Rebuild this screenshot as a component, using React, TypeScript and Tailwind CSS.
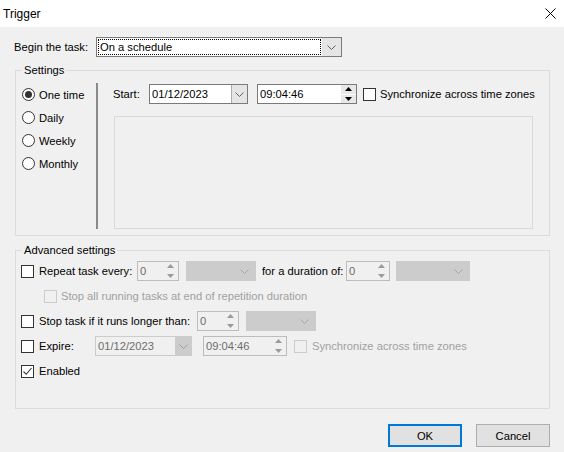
import type { ReactNode } from "react";

const chevron = (color: string) => (
  <svg width="9" height="5" viewBox="0 0 9 5">
    <path d="M0.5 0.5L4.5 4.5L8.5 0.5" fill="none" stroke={color} strokeWidth={1} />
  </svg>
);

function SpinButtons({ color, disabled }: { color: string; disabled?: boolean }) {
  const half = `flex flex-1 justify-center ${disabled ? "" : "bg-[#e8e8e8]"}`;
  return (
    <div className="flex w-[15px] flex-col gap-[1px] self-stretch">
      <div className={`${half} items-center`}>
        <svg width="7" height="4" viewBox="0 0 7 4">
          <path d="M3.5 0L7 4H0Z" fill={color} />
        </svg>
      </div>
      <div className={`${half} items-center`}>
        <svg width="7" height="4" viewBox="0 0 7 4">
          <path d="M0 0H7L3.5 4Z" fill={color} />
        </svg>
      </div>
    </div>
  );
}

function Spin({ value, w, disabled }: { value: string; w: string; disabled?: boolean }) {
  return (
    <div
      className={`flex h-[20px] items-center border ${w} ${
        disabled ? "border-[#bcbcbc] bg-[#f0f0f0] text-[#6d6d6d]" : "border-[#7a7a7a] bg-white text-black"
      }`}
    >
      <span className="flex-1 pl-[2px]">{value}</span>
      <SpinButtons color={disabled ? "#9a9a9a" : "#000000"} disabled={disabled} />
    </div>
  );
}

function DateBox({ value, w, disabled }: { value: string; w: string; disabled?: boolean }) {
  return (
    <div
      className={`flex h-[20px] items-center border ${w} ${
        disabled ? "border-[#cccccc] bg-[#f0f0f0] text-[#6d6d6d]" : "border-[#7a7a7a] bg-white text-black"
      }`}
    >
      <span className="flex-1 pl-[2px]">{value}</span>
      <div
        className={`flex h-full w-[16px] items-center justify-center ${
          disabled ? "bg-[#cccccc]" : "border-l border-[#acacac] bg-[#e5e5e5]"
        }`}
      >
        {chevron(disabled ? "#a0a0a0" : "#606060")}
      </div>
    </div>
  );
}

function GrayCombo({ w }: { w: string }) {
  return (
    <div className={`flex h-[20px] items-center justify-end border border-[#cccccc] bg-[#cccccc] pr-[6px] ${w}`}>
      {chevron("#a6a6a6")}
    </div>
  );
}

function Check({ checked, disabled }: { checked?: boolean; disabled?: boolean }) {
  return (
    <div
      className={`flex h-[13px] w-[13px] shrink-0 items-center justify-center border ${
        disabled ? "border-[#cccccc] bg-[#f0f0f0]" : "border-[#333333] bg-white"
      }`}
    >
      {checked && (
        <svg width="11" height="11" viewBox="0 0 11 11">
          <path d="M1.5 5.5L4.2 8.3L9.5 2" fill="none" stroke="#333333" strokeWidth={1.1} />
        </svg>
      )}
    </div>
  );
}

function Radio({ label, selected }: { label: string; selected?: boolean }) {
  return (
    <div className="flex h-[23px] items-center">
      <div className="flex h-[13px] w-[13px] items-center justify-center rounded-full border border-[#333333] bg-white">
        {selected && <div className="h-[7px] w-[7px] rounded-full bg-[#333333]" />}
      </div>
      <span className="ml-[4px]">{label}</span>
    </div>
  );
}

function Group({ title, children }: { title: string; children: ReactNode }) {
  return (
    <fieldset className="ml-[1px] w-[535px] border border-[#dcdcdc]">
      <legend className="ml-[6px] px-[2px]">{title}</legend>
      {children}
    </fieldset>
  );
}

export default function App() {
  return (
    <div className="h-[452px] w-[564px] overflow-hidden whitespace-nowrap bg-[#f0f0f0] font-['Liberation_Sans',Arial,sans-serif] text-[11.2px] leading-[16px] text-black">
      {/* Title bar */}
      <div className="flex h-[27px] items-center justify-between bg-white pl-[3px] pr-[8px] text-[12px]">
        <span>Trigger</span>
        <svg width="11" height="11" viewBox="0 0 11 11">
          <path d="M0.5 0.5L10.5 10.5M10.5 0.5L0.5 10.5" stroke="#000" strokeWidth={1} />
        </svg>
      </div>

      <div className="pl-[14px]">
        <div className="mt-[10px] flex h-[20px] items-center">
          <span className="w-[82px]">Begin the task:</span>
          <div className="flex h-[20px] w-[246px] border border-[#7a7a7a] bg-white">
            <div className="flex flex-1 p-[1px]">
              <span className="flex flex-1 items-center border border-dotted border-black pl-[1px]">On a schedule</span>
            </div>
            <div className="flex w-[19px] items-center justify-center bg-[#e5e5e5]">{chevron("#606060")}</div>
          </div>
        </div>

        <div className="mt-[5px]">
          <Group title="Settings">
            <div className="flex pb-[6px] pt-[5px]">
              <div className="w-[80px] pl-[6px]">
                <Radio label="One time" selected />
                <Radio label="Daily" />
                <Radio label="Weekly" />
                <Radio label="Monthly" />
              </div>
              <div className="h-[146px] w-[2px] bg-[#8a8a8a]" />
              <div className="pl-[15px]">
                <div className="mt-[1px] flex h-[20px] items-center">
                  <span className="w-[36px]">Start:</span>
                  <DateBox value="01/12/2023" w="w-[99px]" />
                  <div className="ml-[9px]">
                    <Spin value="09:04:46" w="w-[100px]" />
                  </div>
                  <div className="ml-[6px]">
                    <Check />
                  </div>
                  <span className="ml-[4px]">Synchronize across time zones</span>
                </div>
                <div className="ml-[1px] mt-[12px] h-[113px] w-[419px] border border-[#dadada]" />
              </div>
            </div>
          </Group>
        </div>

        <div className="mt-[6px]">
          <Group title="Advanced settings">
            <div className="pb-[27px] pl-[5px] pt-[3px]">
              <div className="flex h-[20px] items-center">
                <Check />
                <span className="ml-[5px] w-[98px]">Repeat task every:</span>
                <Spin value="0" w="w-[42px]" disabled />
                <div className="ml-[7px]">
                  <GrayCombo w="w-[70px]" />
                </div>
                <span className="ml-[6px] w-[84px]">for a duration of:</span>
                <Spin value="0" w="w-[44px]" disabled />
                <div className="ml-[6px]">
                  <GrayCombo w="w-[74px]" />
                </div>
              </div>

              <div className="mt-[5px] flex h-[20px] items-center pl-[23px]">
                <Check disabled />
                <span className="ml-[4px] text-[#a0a0a0]">Stop all running tasks at end of repetition duration</span>
              </div>

              <div className="mt-[5px] flex h-[20px] items-center">
                <Check />
                <span className="ml-[5px] w-[158px]">Stop task if it runs longer than:</span>
                <Spin value="0" w="w-[42px]" disabled />
                <div className="ml-[7px]">
                  <GrayCombo w="w-[70px]" />
                </div>
              </div>

              <div className="mt-[5px] flex h-[20px] items-center">
                <Check />
                <span className="ml-[5px] w-[56px]">Expire:</span>
                <DateBox value="01/12/2023" w="w-[97px]" disabled />
                <div className="ml-[11px]">
                  <Spin value="09:04:46" w="w-[84px]" disabled />
                </div>
                <div className="ml-[7px]">
                  <Check disabled />
                </div>
                <span className="ml-[5px] text-[#a0a0a0]">Synchronize across time zones</span>
              </div>

              <div className="mt-[5px] flex h-[20px] items-center">
                <Check checked />
                <span className="ml-[5px]">Enabled</span>
              </div>
            </div>
          </Group>
        </div>

        <div className="ml-[1px] mt-[15px] flex w-[535px] justify-end gap-[14px]">
          <button
            type="button"
            className="h-[23px] w-[74px] border-2 border-[#0078d7] bg-[#e1e1e1] leading-[16px]"
          >
            OK
          </button>
          <button
            type="button"
            className="h-[23px] w-[74px] border border-[#adadad] bg-[#e1e1e1] leading-[16px]"
          >
            Cancel
          </button>
        </div>
      </div>
    </div>
  );
}
